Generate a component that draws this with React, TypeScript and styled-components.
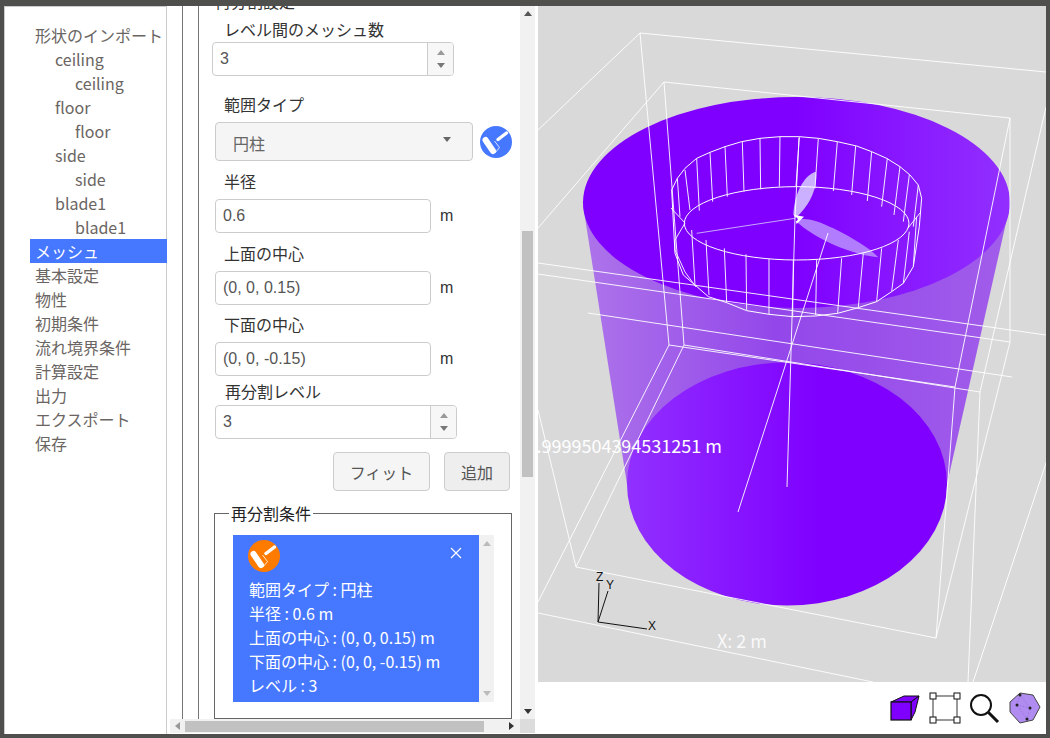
import styled, { createGlobalStyle } from "styled-components";

const GlobalStyle = createGlobalStyle`
  html, body {
    margin: 0;
    padding: 0;
    width: 1050px;
    height: 738px;
    overflow: hidden;
    background: #4f4f4d;
  }
  * {
    box-sizing: border-box;
  }
`;

const CJK = `"Noto Sans CJK JP", "Noto Sans", sans-serif`;
const ARIAL = `"Liberation Sans", "Noto Sans CJK JP", sans-serif`;

const Frame = styled.div`
  display: flex;
  height: 738px;
  padding: 6px 4px 4px 4px;
  font-family: ${CJK};
  font-size: 16px;
`;

const Sidebar = styled.ul`
  list-style: none;
  width: 163px;
  margin: 0;
  padding: 16px 0 0 25px;
  background: #fff;
  border: 1px solid #ccc;
  border-width: 1px 1px 0 1px;
  flex: none;
`;

const NavItem = styled.li<{ $level?: number; $active?: boolean }>`
  height: 24px;
  line-height: 24px;
  white-space: nowrap;
  padding-left: ${({ $level = 0 }) => 5 + $level * 20}px;
  margin-right: -1px;
  color: ${({ $active }) => ($active ? "#fff" : "#6a6562")};
  background: ${({ $active }) => ($active ? "#4678ff" : "transparent")};
`;

const Middle = styled.div`
  width: 371px;
  flex: none;
  display: flex;
  flex-direction: column;
  background: #fff;
`;

const MiddleTop = styled.div`
  display: flex;
  height: 713px;
  padding-right: 3px;
`;

const Gutter = styled.div`
  width: 16px;
  flex: none;
  border-right: 1px solid #777;
`;

const Form = styled.div`
  width: 321px;
  flex: none;
  overflow: hidden;
  padding-left: 16px;
`;

const Heading = styled.div`
  height: 24px;
  line-height: 20px;
  margin-top: -15px;
  color: #333;
`;

const Label = styled.div<{ $top: number; $bottom?: number; $left?: number }>`
  height: 24px;
  line-height: 20px;
  margin-top: ${({ $top }) => $top}px;
  margin-bottom: ${({ $bottom = 0 }) => $bottom}px;
  padding-left: ${({ $left = 10 }) => $left}px;
  color: #333;
`;

const Row = styled.div`
  display: flex;
  align-items: center;
`;

const TextBox = styled.input<{ $width: number }>`
  width: ${({ $width }) => $width}px;
  height: 34px;
  padding: 0 7px;
  border: 1px solid #ccc;
  border-radius: 4px;
  font-family: ${ARIAL};
  font-size: 16px;
  color: #555;
  background: #fff;
  outline: none;
`;

const Unit = styled.span`
  margin-left: 9px;
  font-family: ${ARIAL};
  font-size: 16px;
  color: #333;
`;

const NumberBox = styled.div<{ $shift?: number }>`
  display: flex;
  width: 242px;
  height: 34px;
  margin-left: ${({ $shift = 0 }) => $shift}px;
  border: 1px solid #ccc;
  border-radius: 4px;
  overflow: hidden;
`;

const NumberValue = styled.div`
  flex: 1;
  line-height: 32px;
  padding-left: 7px;
  font-family: ${ARIAL};
  color: #555;
`;

const Spinner = styled.div`
  width: 26px;
  flex: none;
  display: flex;
  flex-direction: column;
  justify-content: space-evenly;
  align-items: center;
  border-left: 1px solid #ccc;
  background: #f7f7f7;
`;

const Tri = styled.span<{ $dir: "up" | "down" | "left" | "right"; $color?: string }>`
  display: block;
  width: 0;
  height: 0;
  border-style: solid;
  border-color: transparent;
  border-width: ${({ $dir }) =>
    $dir === "up"
      ? "0 4px 5px 4px"
      : $dir === "down"
      ? "5px 4px 0 4px"
      : $dir === "left"
      ? "4px 5px 4px 0"
      : "4px 0 4px 5px"};
  ${({ $dir, $color = "#777" }) =>
    `border-${{ up: "bottom", down: "top", left: "right", right: "left" }[$dir]}-color: ${$color};`}
`;

const Select = styled.div`
  display: flex;
  justify-content: space-between;
  width: 258px;
  height: 39px;
  padding: 8px 21px 0 17px;
  border: 1px solid #ccc;
  border-radius: 4px;
  background: #f5f5f5;
  color: #666;
`;

const Caret = styled.span`
  margin-top: 6px;
`;

const ToolCircle = styled.svg`
  display: block;
  margin-left: 7px;
  flex: none;
`;

const Buttons = styled.div`
  display: flex;
  justify-content: flex-end;
  gap: 14px;
  width: 295px;
  margin-top: 13px;
`;

const Button = styled.div<{ $width: number; $bg: string }>`
  width: ${({ $width }) => $width}px;
  height: 39px;
  line-height: 38px;
  text-align: center;
  border: 1px solid #ccc;
  border-radius: 4px;
  background: ${({ $bg }) => $bg};
  color: #555;
`;

const Conditions = styled.fieldset`
  width: 298px;
  height: 215px;
  margin: 13px 0 0 -1px;
  padding: 13px 0 0 18px;
  border: 1.5px solid #666;
  min-width: 0;
`;

const ConditionsTitle = styled.legend`
  margin-left: -4px;
  padding: 0 2px;
  line-height: 18px;
  color: #222;
`;

const CardRow = styled.div`
  display: flex;
  height: 167px;
`;

const Card = styled.div`
  width: 246px;
  flex: none;
  padding: 5px 15px;
  background: #4678ff;
  color: #fff;
`;

const CardHead = styled.div`
  display: flex;
  justify-content: space-between;
  margin-bottom: 5px;
`;

const CardLine = styled.div`
  height: 24px;
  line-height: 24px;
  padding-left: 1px;
  white-space: nowrap;
`;

const CloseIcon = styled.svg`
  margin: 6px 1px 0 0;
`;

const MiniBar = styled.div`
  width: 15px;
  flex: none;
  display: flex;
  flex-direction: column;
  justify-content: space-between;
  align-items: center;
  padding: 6px 0;
  background: #f1f1f1;
`;

const VBar = styled.div`
  width: 15px;
  flex: none;
  display: flex;
  flex-direction: column;
  align-items: center;
  padding: 5px 0;
  background: #f1f1f1;
`;

const VThumb = styled.div`
  width: 11px;
  height: 246px;
  margin: 215px 0 auto;
  background: #c1c1c1;
`;

const HBar = styled.div`
  display: flex;
  align-items: center;
  height: 14px;
  margin-left: 3px;
  margin-right: 3px;
  background: #f1f1f1;
`;

const HThumb = styled.div`
  width: 299px;
  height: 11px;
  margin: 0 auto 0 5px;
  background: #c1c1c1;
`;

const HLeft = styled.div`
  margin-left: 5px;
`;

const HRight = styled.div`
  margin-right: 21px;
`;

const Corner = styled.div`
  width: 15px;
  height: 14px;
  flex: none;
  margin-left: -15px;
  background: #dcdcdc;
`;

const Viewer = styled.div`
  width: 508px;
  flex: none;
  display: flex;
  flex-direction: column;
  background: #fff;
`;

const Scene = styled.svg`
  display: block;
  width: 508px;
  height: 676px;
  background: #d9d9d9;
`;

const SceneLabel = styled.text<{ $faint?: boolean }>`
  font-family: ${CJK};
  font-size: 18px;
  fill: #fff;
  fill-opacity: ${({ $faint }) => ($faint ? 0.85 : 1)};
`;

const AxisLabel = styled.text`
  font-family: ${ARIAL};
  font-size: 12px;
  fill: #111;
`;

const Toolbar = styled.div`
  display: flex;
  justify-content: flex-end;
  gap: 8px;
  height: 52px;
  padding: 10px 5px 0 0;
`;

const OrangeWrap = styled.div`
  margin-left: -7px;
`;

const wires: string[] = [
  "640,33 1046,72",
  "664,82 1010,118",
  "640,33 538,130",
  "664,82 538,228",
  "640,33 669,345",
  "664,82 684,345",
  "1010,118 1010,342",
  "1010,118 955,387 936,638",
  "1046,107 980,392 968,682",
  "1010,342 936,638",
  "1047,460 973,682",
  "538,263 1046,335",
  "538,274 1010,342",
  "588,313 1012,377",
  "669,345 955,387",
  "684,345 980,392",
  "669,345 538,602",
  "684,345 576,567",
  "538,410 576,567 936,638",
  "538,613 873,682",
  "799,138 795,218 787,487",
  "828,233 738,512",
  "671,208 685,223 675,240 675,250 685,272 696,287",
  "908,228 920,213",
];

const ringOutline =
  "95,210 112,175 135,145 170,115 210,97 255,80 305,65 360,55 420,50 478,50 535,55 592,65 650,78 695,95 740,115 780,140 810,165 835,195 845,235 838,320 820,440 790,490 755,515 710,545 655,563 593,580 527,588 458,590 387,583 320,572 260,548 205,530 165,495 130,465 105,400 95,210";

const ringRibs = [
  "112,175 120,290",
  "135,150 150,270",
  "170,115 178,272",
  "210,97 218,245",
  "255,78 262,230",
  "307,65 312,215",
  "360,55 362,208",
  "420,50 418,200",
  "478,50 468,200",
  "535,55 525,205",
  "592,65 580,213",
  "647,78 635,225",
  "695,95 682,243",
  "742,115 725,260",
  "780,140 762,285",
  "808,165 790,305",
  "835,195 820,320",
  "155,330 165,495",
  "198,360 207,525",
  "253,385 260,548",
  "318,403 320,570",
  "387,417 387,583",
  "460,420 458,590",
  "530,420 527,585",
  "605,415 593,580",
  "670,400 655,563",
  "725,385 710,545",
  "775,360 755,515",
  "808,335 790,490",
  "830,290 820,440",
];

function RollerIcon({ color }: { color: string }) {
  return (
    <ToolCircle width="32" height="32" viewBox="0 0 32 32">
      <circle cx="16" cy="16" r="16" fill={color} />
      <path d="M5.5 14 L13 25" stroke="#fff" strokeWidth="6" strokeLinecap="round" />
      <path d="M18 13.5 L26.5 7" stroke="#fff" strokeWidth="3.4" strokeLinecap="round" />
      <path d="M14.5 15 L19.5 21.5 L15 27" stroke="#fff" strokeWidth="0.8" fill="none" />
    </ToolCircle>
  );
}

function Model() {
  return (
    <Scene viewBox="538 6 508 676">
      <defs>
        <linearGradient id="side" gradientUnits="userSpaceOnUse" x1="583" y1="0" x2="1010" y2="0">
          <stop offset="0" stopColor="#ad74ea" />
          <stop offset="0.45" stopColor="#9347ea" />
          <stop offset="1" stopColor="#a15dea" />
        </linearGradient>
        <linearGradient id="top" gradientUnits="userSpaceOnUse" x1="583" y1="0" x2="1010" y2="0">
          <stop offset="0" stopColor="#7f00ff" />
          <stop offset="0.5" stopColor="#7f00ff" />
          <stop offset="1" stopColor="#9230ff" />
        </linearGradient>
        <linearGradient id="bottom" gradientUnits="userSpaceOnUse" x1="627" y1="0" x2="947" y2="0">
          <stop offset="0" stopColor="#9130ff" />
          <stop offset="0.6" stopColor="#7f00ff" />
          <stop offset="1" stopColor="#7f00ff" />
        </linearGradient>
      </defs>
      <polygon points="583,205 1010,205 947,484 627,484" fill="url(#side)" />
      <ellipse cx="787" cy="484" rx="160" ry="121.5" fill="url(#bottom)" />
      <ellipse cx="796.5" cy="202.5" rx="213.5" ry="105.5" fill="url(#top)" />

      <g transform="translate(640 120) scale(0.3333)">
        <path d="M460 285 C462 225 490 165 528 155 C535 210 500 265 470 290 Z" fill="#cbb0ff" />
        <path d="M470 305 C480 290 520 295 580 325 C640 355 690 385 715 412 C640 405 530 360 470 305 Z" fill="#b27cff" />
        <path d="M462 284 L492 290 L470 312 Z" fill="#fff" />
        <circle cx="467" cy="298" r="6" fill="#7f00ff" />
        <polyline points="170,340 465,295" fill="none" stroke="#c9a8ff" strokeWidth="3" />
        <ellipse cx="470" cy="310" rx="337" ry="110" fill="none" stroke="#fff" strokeWidth="3" />
        <polyline points={ringOutline} fill="none" stroke="#fff" strokeWidth="3" />
        {ringRibs.map((points) => (
          <polyline key={points} points={points} fill="none" stroke="#f4edff" strokeWidth="3" />
        ))}
      </g>

      {wires.map((points) => (
        <polyline key={points} points={points} fill="none" stroke="#fff" strokeOpacity="0.9" strokeWidth="1" />
      ))}

      <SceneLabel x="722" y="453" textAnchor="end">
        1.9999504394531251 m
      </SceneLabel>
      <SceneLabel x="717" y="648" $faint>
        X: 2 m
      </SceneLabel>

      <path d="M598 622 L647 629 M598 622 L608 591 M598 622 L599 583" stroke="#111" strokeWidth="1" fill="none" />
      <AxisLabel x="596" y="581">Z</AxisLabel>
      <AxisLabel x="606" y="589">Y</AxisLabel>
      <AxisLabel x="648" y="630">X</AxisLabel>
    </Scene>
  );
}

function CubeIcon() {
  return (
    <svg width="32" height="32" viewBox="0 0 32 32">
      <path d="M2 10 L15 4 L30 4 L22 10 Z" fill="#7f00ff" stroke="#111" strokeWidth="1" />
      <path d="M22 10 L30 4 L26 20 L22 28 Z" fill="#7f00ff" stroke="#111" strokeWidth="1" />
      <rect x="2" y="10" width="20" height="18" fill="#7f00ff" stroke="#111" strokeWidth="1.2" />
    </svg>
  );
}

function SelectIcon() {
  return (
    <svg width="32" height="32" viewBox="0 0 32 32">
      <rect x="4" y="4" width="24" height="24" fill="none" stroke="#555" strokeWidth="1.2" />
      {[
        [1, 1],
        [25, 1],
        [1, 25],
        [25, 25],
      ].map(([x, y]) => (
        <rect key={`${x}-${y}`} x={x} y={y} width="6" height="6" fill="#fff" stroke="#111" strokeWidth="1" />
      ))}
    </svg>
  );
}

function SearchIcon() {
  return (
    <svg width="32" height="32" viewBox="0 0 32 32">
      <circle cx="12" cy="13" r="10" fill="none" stroke="#111" strokeWidth="2" />
      <path d="M19.5 20.5 L29 30" stroke="#111" strokeWidth="3" />
    </svg>
  );
}

function MeshIcon() {
  return (
    <svg width="32" height="32" viewBox="0 0 32 32">
      <polygon points="11,1 24,3 31,15 24,28 11,31 1,20 1,10" fill="#b18cf0" stroke="#444" strokeWidth="1" />
      <path d="M11 3 L8 13 L18 27 L21 16 Z M8 13 L21 16" stroke="#8a63cf" strokeWidth="0.6" strokeDasharray="1.5 1.5" fill="none" />
      {[
        [11, 3],
        [8, 13],
        [21, 16],
        [18, 27],
      ].map(([x, y]) => (
        <circle key={`${x}-${y}`} cx={x} cy={y} r="1.5" fill="#222" />
      ))}
    </svg>
  );
}

const nav: { label: string; level?: number; active?: boolean }[] = [
  { label: "形状のインポート" },
  { label: "ceiling", level: 1 },
  { label: "ceiling", level: 2 },
  { label: "floor", level: 1 },
  { label: "floor", level: 2 },
  { label: "side", level: 1 },
  { label: "side", level: 2 },
  { label: "blade1", level: 1 },
  { label: "blade1", level: 2 },
  { label: "メッシュ", active: true },
  { label: "基本設定" },
  { label: "物性" },
  { label: "初期条件" },
  { label: "流れ境界条件" },
  { label: "計算設定" },
  { label: "出力" },
  { label: "エクスポート" },
  { label: "保存" },
];

const conditionLines = [
  "範囲タイプ : 円柱",
  "半径 : 0.6 m",
  "上面の中心 : (0, 0, 0.15) m",
  "下面の中心 : (0, 0, -0.15) m",
  "レベル : 3",
];

function Stepper({ value, shift }: { value: string; shift?: number }) {
  return (
    <NumberBox $shift={shift}>
      <NumberValue>{value}</NumberValue>
      <Spinner>
        <Tri $dir="up" $color="#999" />
        <Tri $dir="down" />
      </Spinner>
    </NumberBox>
  );
}

export default function App() {
  return (
    <>
      <GlobalStyle />
      <Frame>
        <Sidebar>
          {nav.map((item, index) => (
            <NavItem key={index} $level={item.level} $active={item.active}>
              {item.label}
            </NavItem>
          ))}
        </Sidebar>
        <Middle>
          <MiddleTop>
            <Gutter />
            <Gutter />
            <Form>
              <Heading>再分割設定</Heading>
              <Label $top={4} $bottom={-1} $left={9}>
                レベル間のメッシュ数
              </Label>
              <Stepper value="3" shift={-3} />
              <Label $top={18} $bottom={4} $left={9}>
                範囲タイプ
              </Label>
              <Row>
                <Select>
                  円柱
                  <Caret>
                    <Tri $dir="down" $color="#666" />
                  </Caret>
                </Select>
                <RollerIcon color="#4678ff" />
              </Row>
              <Label $top={10} $bottom={4} $left={9}>
                半径
              </Label>
              <Row>
                <TextBox $width={216} readOnly defaultValue="0.6" />
                <Unit>m</Unit>
              </Row>
              <Label $top={10} $bottom={4} $left={9}>
                上面の中心
              </Label>
              <Row>
                <TextBox $width={216} readOnly defaultValue="(0, 0, 0.15)" />
                <Unit>m</Unit>
              </Row>
              <Label $top={9} $bottom={4} $left={9}>
                下面の中心
              </Label>
              <Row>
                <TextBox $width={216} readOnly defaultValue="(0, 0, -0.15)" />
                <Unit>m</Unit>
              </Row>
              <Label $top={5} $bottom={0}>
                再分割レベル
              </Label>
              <Stepper value="3" />
              <Buttons>
                <Button $width={97} $bg="#f5f5f5">
                  フィット
                </Button>
                <Button $width={66} $bg="#eeeeee">
                  追加
                </Button>
              </Buttons>
              <Conditions>
                <ConditionsTitle>再分割条件</ConditionsTitle>
                <CardRow>
                  <Card>
                    <CardHead>
                      <OrangeWrap>
                        <RollerIcon color="#ff7b00" />
                      </OrangeWrap>
                      <CloseIcon width="14" height="14" viewBox="0 0 14 14">
                        <path d="M2 2 L12 12 M12 2 L2 12" stroke="#fff" strokeWidth="1.2" />
                      </CloseIcon>
                    </CardHead>
                    {conditionLines.map((line) => (
                      <CardLine key={line}>{line}</CardLine>
                    ))}
                  </Card>
                  <MiniBar>
                    <Tri $dir="up" $color="#bbb" />
                    <Tri $dir="down" $color="#bbb" />
                  </MiniBar>
                </CardRow>
              </Conditions>
            </Form>
            <VBar>
              <Tri $dir="up" $color="#555" />
              <VThumb />
              <Tri $dir="down" $color="#333" />
            </VBar>
          </MiddleTop>
          <HBar>
            <HLeft>
              <Tri $dir="left" $color="#999" />
            </HLeft>
            <HThumb />
            <HRight>
              <Tri $dir="right" $color="#333" />
            </HRight>
            <Corner />
          </HBar>
        </Middle>
        <Viewer>
          <Model />
          <Toolbar>
            <CubeIcon />
            <SelectIcon />
            <SearchIcon />
            <MeshIcon />
          </Toolbar>
        </Viewer>
      </Frame>
    </>
  );
}
